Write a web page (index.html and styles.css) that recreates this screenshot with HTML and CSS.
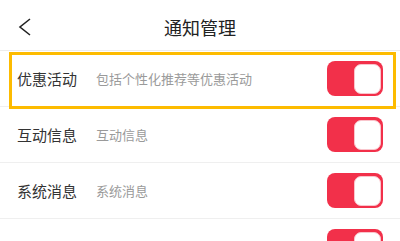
FILE: index.html
```html
<!DOCTYPE html>
<html lang="zh">
<head>
<meta charset="utf-8">
<link rel="stylesheet" href="styles.css">
</head>
<body>
<div class="page">
  <header class="topbar">
    <svg class="back" width="16" height="20" viewBox="0 0 16 20"><polyline points="13,2 3,10 13,18" fill="none" stroke="#222" stroke-width="1.6" stroke-linejoin="miter"/></svg>
    <h1 class="title">通知管理</h1>
  </header>
  <div class="list">
    <div class="row">
      <span class="name">优惠活动</span>
      <span class="desc">包括个性化推荐等优惠活动</span>
      <span class="toggle"><span class="knob"></span></span>
      <div class="highlight"></div>
    </div>
    <div class="row">
      <span class="name">互动信息</span>
      <span class="desc">互动信息</span>
      <span class="toggle"><span class="knob"></span></span>
    </div>
    <div class="row">
      <span class="name">系统消息</span>
      <span class="desc">系统消息</span>
      <span class="toggle"><span class="knob"></span></span>
    </div>
    <div class="row">
      <span class="name"></span>
      <span class="desc"></span>
      <span class="toggle"><span class="knob"></span></span>
    </div>
  </div>
</div>
</body>
</html>
```
FILE: styles.css
```css
html, body {
  margin: 0;
  padding: 0;
  background: #fff;
}
body {
  font-family: "Noto Sans CJK SC", "Noto Sans", sans-serif;
  width: 400px;
  height: 241px;
  overflow: hidden;
}
.page {
  display: flex;
  flex-direction: column;
}
.topbar {
  height: 51px;
  box-sizing: border-box;
  border-bottom: 1px solid #ececec;
  display: flex;
  align-items: center;
  justify-content: center;
  position: relative;
  padding-top: 4px;
}
.back {
  position: absolute;
  left: 17px;
  top: 17px;
}
.title {
  margin: 0;
  font-size: 18px;
  font-weight: 400;
  color: #222;
  line-height: 1;
}
.list {
  display: flex;
  flex-direction: column;
}
.row {
  position: relative;
  height: 56px;
  box-sizing: border-box;
  border-bottom: 1px solid #efefef;
  display: flex;
  align-items: center;
  padding: 0 17px 0 17px;
}
.name {
  font-size: 15px;
  color: #333;
  width: 79px;
  flex: none;
}
.desc {
  font-size: 13px;
  color: #9a9a9a;
  flex: 1;
}
.toggle {
  width: 56px;
  height: 35px;
  box-sizing: border-box;
  border-radius: 8px;
  background: #f2304a;
  display: flex;
  align-items: center;
  justify-content: flex-end;
  padding-right: 2px;
  flex: none;
}
.knob {
  width: 27px;
  height: 30px;
  box-sizing: border-box;
  background: #fff;
  border-radius: 7px;
  border: 1px solid #f9c5cc;
}
.highlight {
  position: absolute;
  left: 9px;
  right: 4px;
  top: 1px;
  bottom: -3px;
  border: 3px solid #fdbb00;
  pointer-events: none;
}
```
